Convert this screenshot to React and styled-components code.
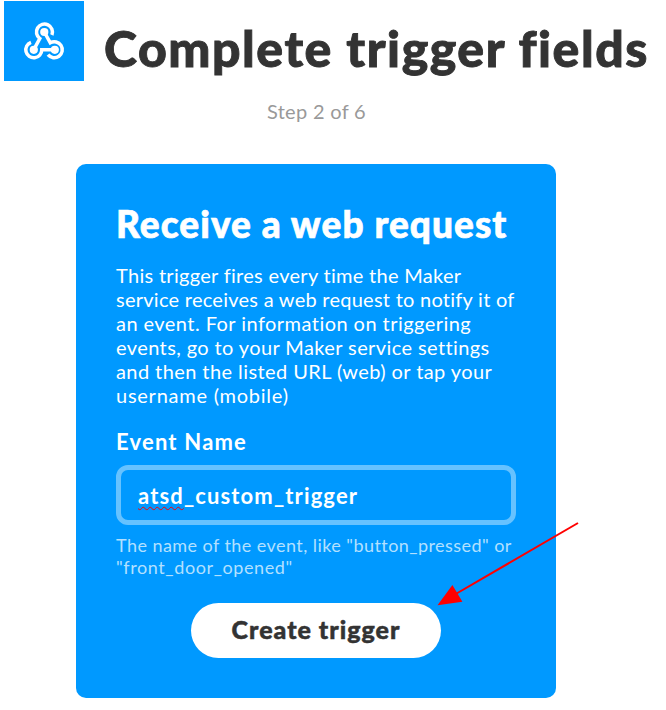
import React from "react";
import styled, { createGlobalStyle } from "styled-components";

const Global = createGlobalStyle`
  * { box-sizing: border-box; }
  body {
    margin: 0;
    background: #fff;
    font-family: Lato, "Open Sans", sans-serif;
    font-variant-ligatures: none;
  }
`;

const Page = styled.main`
  position: relative;
  width: 666px;
  height: 710px;
  overflow: hidden;
`;

const Header = styled.header`
  display: flex;
  padding: 1px 0 0 4px;
  height: 81px;
`;

const Logo = styled.div`
  flex: none;
  width: 80px;
  height: 80px;
  background: #0099ff;
`;

const Title = styled.h1`
  margin: 17px 0 0 20px;
  font-size: 50px;
  line-height: 60px;
  font-weight: 900;
  letter-spacing: 1.53px;
  -webkit-text-stroke: 0.9px #333;
  color: #333;
  white-space: nowrap;
`;

const Step = styled.p`
  margin: 18px 0 0 267px;
  font-size: 20px;
  line-height: 24px;
  letter-spacing: 0.3px;
  color: #999;
`;

const Card = styled.section`
  width: 480px;
  height: 534px;
  margin: 41px 0 0 76px;
  padding: 38px 40px 0;
  border-radius: 10px;
  background: #0099ff;
  color: #fff;
`;

const Heading = styled.h2`
  margin: 0;
  font-size: 37px;
  line-height: 44px;
  font-weight: 900;
  letter-spacing: 1.05px;
  -webkit-text-stroke: 0.7px #fff;
  white-space: nowrap;
`;

const Description = styled.p`
  margin: 17px 0 0;
  font-size: 20px;
  line-height: 24px;
`;

const Line = styled.span`
  display: block;
  white-space: nowrap;
  letter-spacing: ${(p) => p.$ls || 0}px;
`;

const Label = styled.label`
  display: block;
  margin-top: 21px;
  font-size: 22px;
  line-height: 28px;
  font-weight: 700;
  letter-spacing: 1.2px;
`;

const Field = styled.div`
  display: flex;
  align-items: center;
  height: 60px;
  margin-top: 9px;
  padding: 0 17px 0;
  border: 5px solid #66c2ff;
  border-radius: 12px;
  font-size: 22px;
  font-weight: 700;
  letter-spacing: 1.13px;
`;

const Misspelled = styled.span`
  text-decoration: underline wavy #f00 1px;
  text-decoration-skip-ink: none;
  text-underline-offset: 2px;
`;

const Hint = styled.p`
  margin: 9px 0 0;
  font-size: 18px;
  line-height: 22px;
  color: #b3e0ff;
`;

const Button = styled.button`
  display: block;
  width: 250px;
  height: 55px;
  margin: 25px auto 0;
  padding: 0 0 2px;
  border: 0;
  border-radius: 28px;
  background: #fff;
  color: #333;
  font: 900 25px/53px Lato, sans-serif;
  letter-spacing: 1px;
  -webkit-text-stroke: 0.5px #333;
`;

const Arrow = styled.svg`
  position: absolute;
  left: 430px;
  top: 515px;
`;

const description = [
  ["This trigger fires every time the Maker", 0.3],
  ["service receives a web request to notify it of", 0.26],
  ["an event. For information on triggering", 0.45],
  ["events, go to your Maker service settings", 0.4],
  ["and then the listed URL (web) or tap your", 0.42],
  ["username (mobile)", 0.75],
];

const hint = [
  ['The name of the event, like "button_pressed" or', 0.44],
  ['"front_door_opened"', 0.6],
];

function WebhookIcon() {
  return (
    <svg width="80" height="80" viewBox="4 1 80 80" fill="none" stroke="#fff" strokeWidth="3.5">
      <path d="M51.9 35A8 8 0 1 0 39.8 38.6L33.8 49.7" />
      <path d="M44.3 32L50.3 42.8A8 8 0 1 1 48 54.7" />
      <path d="M54.9 49.8H41.8A8 8 0 1 1 31 42.3" />
      <g fill="#fff" stroke="none">
        <circle cx="44.3" cy="32" r="4.1" />
        <circle cx="33.8" cy="49.8" r="4.1" />
        <circle cx="54.8" cy="49.8" r="4.1" />
      </g>
    </svg>
  );
}

export default function App() {
  return (
    <>
      <Global />
      <Page>
        <Header>
          <Logo><WebhookIcon /></Logo>
          <Title>Complete trigger fields</Title>
        </Header>
        <Step>Step 2 of 6</Step>
        <Card>
          <Heading>Receive a web request</Heading>
          <Description>
            {description.map(([text, ls]) => <Line key={text} $ls={ls}>{text}</Line>)}
          </Description>
          <Label>Event Name</Label>
          <Field><Misspelled>atsd</Misspelled>_custom_trigger</Field>
          <Hint>
            {hint.map(([text, ls]) => <Line key={text} $ls={ls}>{text}</Line>)}
          </Hint>
          <Button>Create trigger</Button>
        </Card>
        <Arrow width="155" height="95" viewBox="430 515 155 95">
          <path d="M578 523L454 595" stroke="#f00" strokeWidth="2" />
          <path d="M437.5 605.3L452.4 585L462.4 601.8Z" fill="#f00" />
        </Arrow>
      </Page>
    </>
  );
}
